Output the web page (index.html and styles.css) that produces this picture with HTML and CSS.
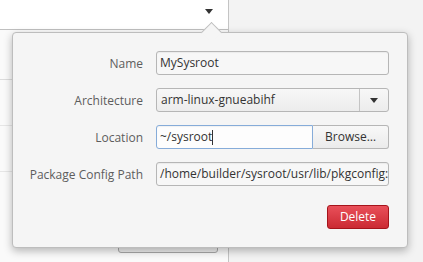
FILE: index.html
```html
<!DOCTYPE html>
<html lang="en">
<head>
  <meta charset="UTF-8">
  <title>Sysroot</title>
  <link rel="stylesheet" href="styles.css">
</head>
<body>
  <div class="window">
    <div class="sidebar">
      <div class="header">
        <span class="arrow-down"></span>
      </div>
      <div class="row row-first"></div>
      <div class="row"></div>
      <div class="row"></div>
      <div class="spacer"></div>
      <div class="add-button"></div>
    </div>
    <div class="content"></div>
  </div>

  <div class="popover">
    <div class="popover-tail"></div>
    <div class="form">
      <div class="label">Name</div>
      <div class="entry">MySysroot</div>

      <div class="label">Architecture</div>
      <div class="combo">
        <div class="combo-text">arm-linux-gnueabihf</div>
        <div class="combo-button"><span class="arrow-down"></span></div>
      </div>

      <div class="label">Location</div>
      <div class="linked">
        <div class="entry focused">~/sysroot<span class="caret"></span></div>
        <div class="button">Browse…</div>
      </div>

      <div class="label">Package Config Path</div>
      <div class="entry">/home/builder/sysroot/usr/lib/pkgconfig:/home/builder/sysroot/usr/share/pkgconfig</div>
    </div>
    <div class="actions">
      <div class="button destructive">Delete</div>
    </div>
  </div>
</body>
</html>
```

FILE: styles.css
```css
body {
  margin: 0;
  font-family: 'Open Sans', 'Noto Sans', sans-serif;
  font-size: 12px;
  background-color: #f3f3f3;
  overflow: hidden;
}
.window {
  display: flex;
  height: 262px;
}
.sidebar {
  width: 228px;
  border-right: 1px solid #c4c4c4;
  background-color: #fafafa;
  display: flex;
  flex-direction: column;
}
.header {
  height: 30px;
  background-color: #ffffff;
  border-bottom: 1px solid #c0c0c0;
  display: flex;
  justify-content: flex-end;
  align-items: flex-start;
  padding-right: 15px;
  padding-top: 9px;
  box-sizing: border-box;
}
.arrow-down {
  display: block;
  width: 0;
  height: 0;
  border-left: 4px solid transparent;
  border-right: 4px solid transparent;
  border-top: 5px solid #333333;
}
.row {
  height: 45px;
  border-bottom: 1px solid #e6e6e6;
}
.row-first {
  height: 49px;
  border-bottom-color: #dcdcdc;
}
.spacer {
  flex: 1;
}
.add-button {
  width: 98px;
  height: 26px;
  margin: 0 0 9px 118px;
  border: 1px solid #a9a9a9;
  border-radius: 3px;
  background-color: #eeeeee;
}
.content {
  flex: 1;
}

.popover {
  position: absolute;
  left: 12px;
  top: 32px;
  width: 396px;
  height: 216px;
  box-sizing: border-box;
  background-color: #f5f5f5;
  border: 1px solid #bdbdbd;
  border-radius: 4px;
  box-shadow: 0 3px 9px rgba(0, 0, 0, 0.28);
  padding: 18px 18px 18px 12px;
  display: flex;
  flex-direction: column;
  justify-content: space-between;
}
.popover-tail {
  position: absolute;
  left: 191px;
  top: -8px;
  width: 14px;
  height: 14px;
  background-color: #f5f5f5;
  border-top: 1px solid #bdbdbd;
  border-left: 1px solid #bdbdbd;
  transform: rotate(45deg);
}
.form {
  display: grid;
  grid-template-columns: auto 233px;
  column-gap: 13px;
  row-gap: 13px;
  justify-content: end;
  align-items: center;
}
.label {
  text-align: right;
  color: #5d5d5d;
  white-space: nowrap;
}
.entry, .combo, .button {
  height: 24px;
  box-sizing: border-box;
  border: 1px solid #b6b6b6;
  border-radius: 3px;
  line-height: 22px;
  color: #333333;
  white-space: nowrap;
  overflow: hidden;
}
.entry {
  background-color: #f7f7f7;
  padding: 0 3px;
  box-shadow: inset 0 1px 1px rgba(0, 0, 0, 0.05);
}
.entry.focused {
  background-color: #fdfdfd;
  border-color: #86acd9;
  flex: 1;
  border-radius: 3px 0 0 3px;
}
.caret {
  display: inline-block;
  width: 1px;
  height: 15px;
  background-color: #333333;
  vertical-align: -4px;
}
.combo {
  display: flex;
  background-image: linear-gradient(#f7f7f7, #ececec);
}
.combo-text {
  flex: 1;
  padding: 0 4px;
}
.combo-button {
  width: 28px;
  border-left: 1px solid #c4c4c4;
  display: flex;
  align-items: center;
  justify-content: center;
}
.linked {
  display: flex;
}
.button {
  padding: 0 8px;
  text-align: center;
  background-image: linear-gradient(#f8f8f8, #ebebeb);
}
.linked .button {
  width: 76px;
  border-left: none;
  border-radius: 0 3px 3px 0;
  padding: 0;
}
.actions {
  display: flex;
  justify-content: flex-end;
}
.button.destructive {
  width: 62px;
  padding: 0;
  color: #ffffff;
  border-color: #a5141b;
  background-image: linear-gradient(#e9505a, #cb2a33);
}
```
